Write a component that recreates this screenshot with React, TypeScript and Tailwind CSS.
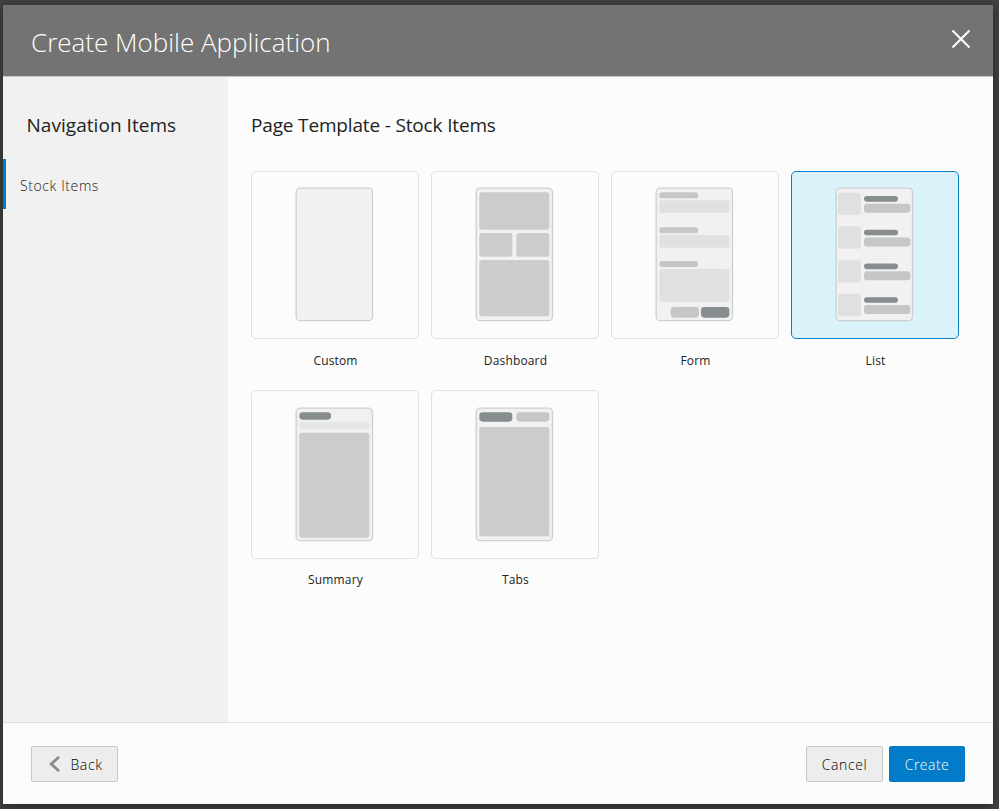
import type { ReactNode } from 'react';

type Block = [x: number, y: number, w: number, h: number, r: number, fill: string];

const PANEL = '#cbccce';
const SOFT = '#dfe1e0';
const BAR = '#c5c6c8';
const DARK = '#878c8e';

const dashboard: Block[] = [
  [163, 82, 210, 112, 8, PANEL],
  [163, 204, 99, 71, 8, PANEL],
  [274, 204, 99, 71, 8, PANEL],
  [163, 285, 210, 169, 8, PANEL],
];

const form: Block[] = [
  [163, 82, 116, 18, 8, BAR],
  [163, 106, 210, 38, 8, SOFT],
  [163, 187, 116, 18, 8, BAR],
  [163, 210, 210, 38, 8, SOFT],
  [163, 288, 116, 18, 8, BAR],
  [163, 312, 210, 99, 8, SOFT],
  [197, 426, 85, 32, 10, BAR],
  [288, 426, 85, 32, 10, DARK],
];

const list: Block[] = [0, 101, 202.5, 303.5].flatMap((dy): Block[] => [
  [159, 83 + dy, 69, 67, 9, SOFT],
  [237, 93 + dy, 102, 17, 8.5, DARK],
  [237, 116.5 + dy, 139, 27, 9, BAR],
]);

const summary: Block[] = [
  [163, 82, 95, 22, 10, DARK],
  [163, 110, 210, 23, 8, '#e5e7e6'],
  [163, 143, 210, 315, 8, PANEL],
];

const tabs: Block[] = [
  [163, 82, 99, 28, 10, DARK],
  [274, 82, 99, 28, 10, BAR],
  [163, 126, 210, 328, 8, PANEL],
];

function Thumbnail({ blocks }: { blocks: Block[] }) {
  return (
    <svg className="block h-[166px] w-[166px]" viewBox="21 21 498 498" aria-hidden="true">
      <rect x="153.5" y="69.5" width="229" height="397.5" rx="12" fill="#f1f1f1" stroke="#cfd0d1" strokeWidth="4" />
      {blocks.map(([x, y, w, h, r, fill], i) => (
        <rect key={i} x={x} y={y} width={w} height={h} rx={r} fill={fill} />
      ))}
    </svg>
  );
}

function Template({ label, blocks, selected, second }: {
  label: string; blocks: Block[]; selected?: boolean; second?: boolean;
}) {
  return (
    <div className="flex w-[168px] flex-col">
      <button
        className={`rounded-[5px] border ${selected ? 'border-[#0a7fc9] bg-[#daf3fa]' : 'border-[#e0e0e0] bg-[#fcfcfc]'} ${second ? 'h-[169px] pt-px' : 'h-[168px]'}`}
      >
        <Thumbnail blocks={blocks} />
      </button>
      <span className={`whitespace-nowrap pl-px text-center text-[12px] leading-5 tracking-[0.15px] text-[#222] ${second ? 'mt-[11px]' : 'mt-3'}`}>{label}</span>
    </div>
  );
}

function Button({ className, children }: { className: string; children: ReactNode }) {
  return (
    <button className={`flex h-9 items-center justify-center whitespace-nowrap rounded-[2px] border text-[14px] font-light ${className}`}>
      {children}
    </button>
  );
}

export default function App() {
  return (
    <div className="h-[809px] w-[999px] overflow-hidden bg-[#414244] pl-[3px] pt-[5px] font-['Open_Sans','Noto_Sans',sans-serif]">
      <div className="flex h-[799px] w-[990px] flex-col bg-[#fcfcfc] shadow-[0_2px_10px_rgba(0,0,0,0.45)]">
        <header className="flex h-[72px] shrink-0 items-start justify-between border-b border-[#c8c8c8] bg-[#737373] pl-[28px] pr-[22px] text-white">
          <h1 className="mt-[19px] whitespace-nowrap text-[26px] font-light leading-[36px]">Create Mobile Application</h1>
          <svg className="mt-[24px] h-5 w-5" viewBox="0 0 20 20" fill="none" stroke="#fff" strokeWidth="2">
            <path d="M1.5 1.5 18.5 18.5M18.5 1.5 1.5 18.5" />
          </svg>
        </header>

        <div className="flex min-h-0 flex-1">
          <aside className="w-[225px] shrink-0 bg-[#f1f1f1] pt-[34px]">
            <h2 className="whitespace-nowrap pl-[23.5px] text-[19px] leading-7 tracking-[0.04px] text-[#222]">Navigation Items</h2>
            <div className="mt-[20px] flex h-[50px] items-center border-l-[3px] border-[#027bc8] pl-[14px] pt-[3px] text-[14px] font-light tracking-[0.6px] text-[#222]">
              <span>Stock Items</span>
            </div>
          </aside>
          <main className="flex-1 pl-[23px] pt-[34px]">
            <h2 className="whitespace-nowrap text-[19px] leading-7 tracking-[-0.16px] text-[#222]">Page Template - Stock Items</h2>
            <div className="mt-8 flex gap-3">
              <Template label="Custom" blocks={[]} />
              <Template label="Dashboard" blocks={dashboard} />
              <Template label="Form" blocks={form} />
              <Template label="List" blocks={list} selected />
            </div>
            <div className="mt-[19px] flex gap-3">
              <Template label="Summary" blocks={summary} second />
              <Template label="Tabs" blocks={tabs} second />
            </div>
          </main>
        </div>

        <footer className="flex h-[82px] shrink-0 items-start border-t border-[#e0e0e0] px-7 pt-[23px]">
          <Button className="w-[87px] border-[#c8c8c8] bg-[#ededed] pl-[3px] tracking-[0.6px] text-black">
            <svg className="mr-[10px] h-4 w-[11px]" viewBox="0 0 11 16" fill="none" stroke="#878b8e" strokeWidth="2.8">
              <path d="M10 1 2.2 8 10 15" />
            </svg>
            <span>Back</span>
          </Button>
          <Button className="ml-auto w-[77px] border-[#c8c8c8] bg-[#ededed] tracking-[0.6px] text-black">Cancel</Button>
          <Button className="ml-[6px] w-[76px] border-[#027bc8] bg-[#027bc8] tracking-[0.5px] text-white">Create</Button>
        </footer>
      </div>
    </div>
  );
}
